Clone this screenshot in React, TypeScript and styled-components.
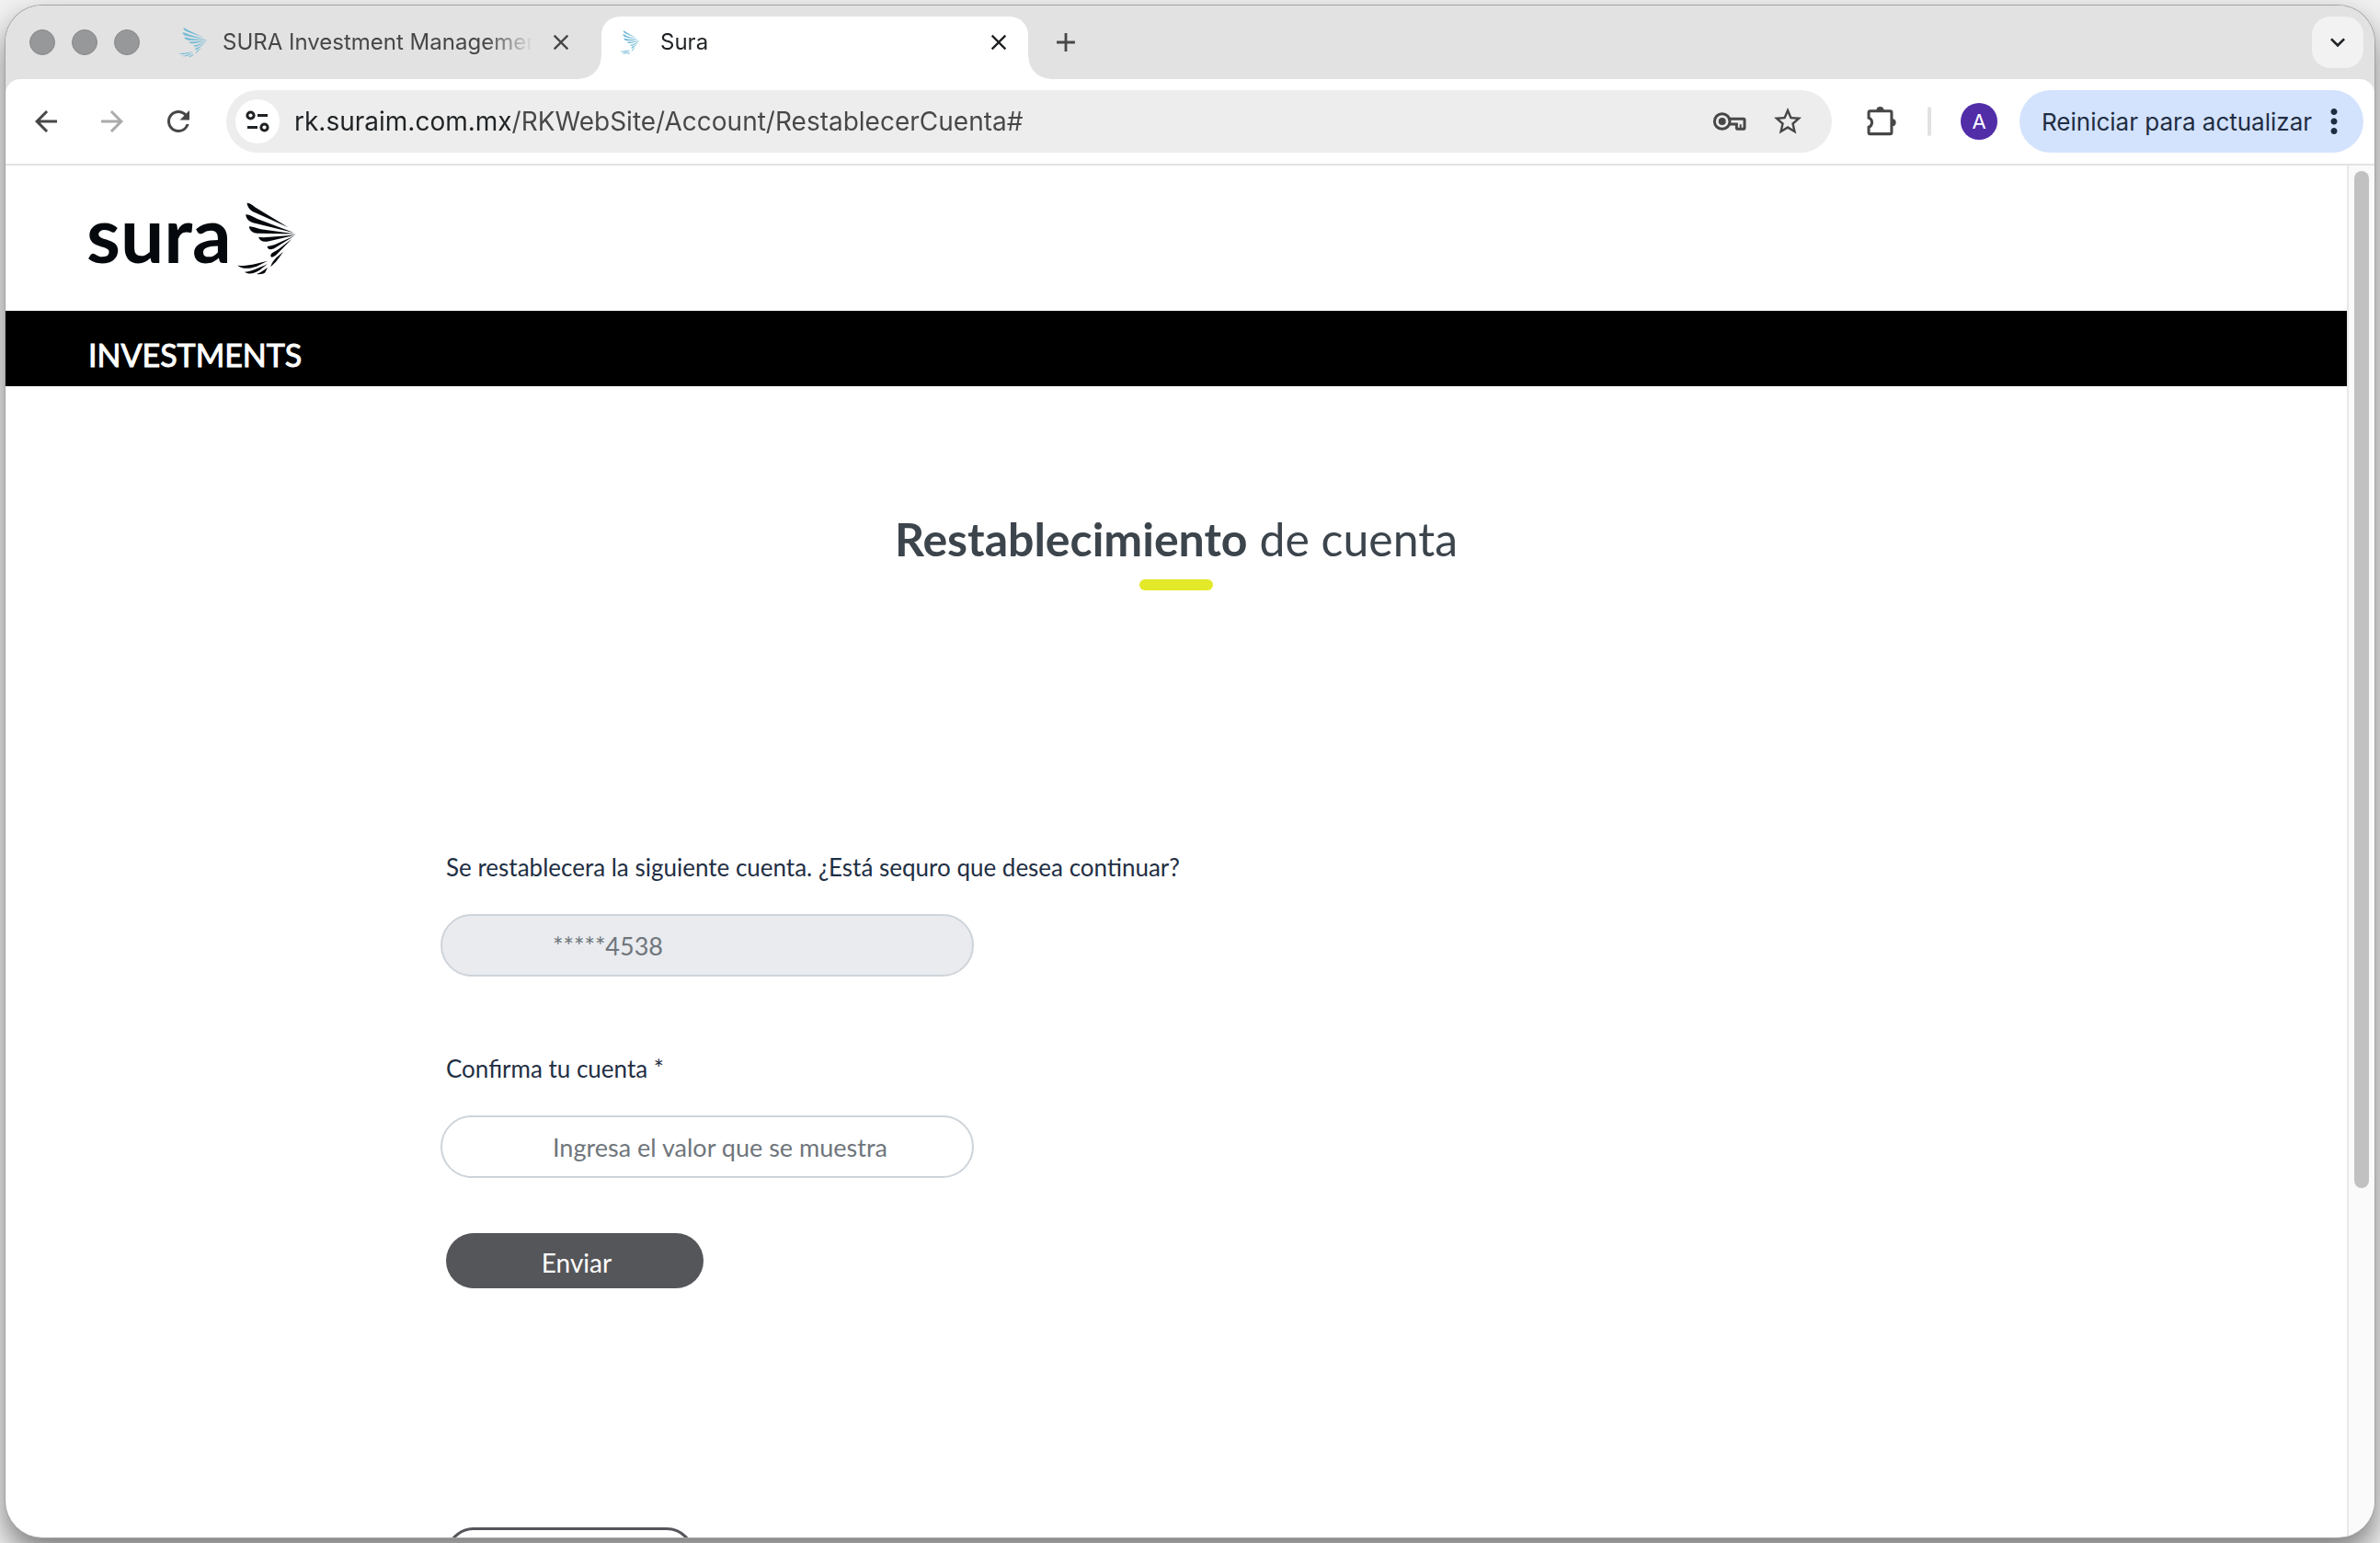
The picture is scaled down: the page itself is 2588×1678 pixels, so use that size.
import React from "react";
import styled, { createGlobalStyle } from "styled-components";
import {
  MdAdd,
  MdArrowBack,
  MdArrowForward,
  MdClose,
  MdExpandMore,
  MdMoreVert,
  MdRefresh,
  MdStarBorder,
} from "react-icons/md";

const uiFont = `Inter, Roboto, "Liberation Sans", sans-serif`;
const siteFont = `Lato, "Open Sans", sans-serif`;

const GlobalStyle = createGlobalStyle`
  *, *::before, *::after { box-sizing: border-box; }
  body { margin: 0; background: #f1f1f2; }
  button { border: 0; padding: 0; margin: 0; background: none; cursor: pointer; }
`;

/* ---------- Browser window ---------- */

const Desktop = styled.div`
  display: flex;
  height: 100vh;
  padding: 6px;
  overflow: hidden;
`;

const Window = styled.div`
  flex: 1;
  display: flex;
  flex-direction: column;
  min-width: 0;
  overflow: hidden;
  border-radius: 40px;
  background: #ffffff;
  box-shadow: 0 0 0 1px #a4a4a6, 0 16px 32px rgba(0, 0, 0, 0.5);
  font-family: ${uiFont};
`;

const Chrome = styled.header`
  background: #e2e2e2;
`;

const TabStrip = styled.div`
  display: flex;
  align-items: flex-start;
  height: 80px;
  padding: 12px 12px 0 26px;
`;

const Lights = styled.div`
  display: flex;
  align-items: center;
  gap: 18px;
  height: 56px;
  margin-right: 22px;
`;

const Light = styled.span`
  width: 28px;
  height: 28px;
  border: 1px solid #87888a;
  border-radius: 50%;
  background: #97989a;
`;

const Tab = styled.div<{ $active?: boolean }>`
  position: relative;
  display: flex;
  align-items: center;
  flex: 0 1 ${(p) => (p.$active ? 464 : 468)}px;
  height: 68px;
  min-width: 0;
  margin-right: ${(p) => (p.$active ? 24 : 12)}px;
  padding: 0 18px 12px 20px;
  border-radius: 20px 20px 0 0;
  background: ${(p) => (p.$active ? "#ffffff" : "transparent")};
  color: ${(p) => (p.$active ? "#1f2224" : "#474747")};

  &::before,
  &::after {
    content: "";
    display: ${(p) => (p.$active ? "block" : "none")};
    position: absolute;
    bottom: 0;
    width: 24px;
    height: 24px;
  }
  &::before {
    right: 100%;
    background: radial-gradient(circle at 0 0, transparent 23px, #ffffff 24px);
  }
  &::after {
    left: 100%;
    background: radial-gradient(circle at 100% 0, transparent 23px, #ffffff 24px);
  }
`;

const TabIcon = styled.span<{ $width: number }>`
  display: flex;
  flex: none;
  width: ${(p) => p.$width}px;
`;

const TabTitle = styled.span`
  flex: 1;
  min-width: 0;
  margin: 0 16px;
  overflow: hidden;
  white-space: nowrap;
  font-size: 24px;
  line-height: 32px;
  mask-image: linear-gradient(90deg, #000 calc(100% - 52px), transparent);
`;

const IconButton = styled.button<{ $size: number; $color?: string }>`
  display: flex;
  flex: none;
  align-items: center;
  justify-content: center;
  width: ${(p) => p.$size}px;
  height: ${(p) => p.$size}px;
  color: ${(p) => p.$color ?? "inherit"};
  svg { flex: none; }
`;

const NewTabSlot = styled.div`
  display: flex;
  align-items: center;
  flex: 1;
  height: 56px;
`;

const TabSearch = styled(IconButton)`
  border-radius: 20px;
  background: #f2f2f2;
`;

const Toolbar = styled.div`
  display: flex;
  align-items: center;
  padding: 12px 12px 12px 26px;
  border-bottom: 2px solid #e2e2e2;
  border-radius: 16px 16px 0 0;
  background: #ffffff;
`;

const NavButtons = styled.nav`
  display: flex;
  gap: 36px;
  margin-right: 34px;
`;

const Omnibox = styled.div`
  display: flex;
  align-items: center;
  flex: 1;
  min-width: 0;
  height: 68px;
  padding: 0 30px 0 10px;
  border-radius: 34px;
  background: #ededed;
`;

const SiteInfo = styled(IconButton)`
  margin-right: 16px;
  border-radius: 50%;
  background: #ffffff;
`;

const Address = styled.input`
  flex: 1;
  min-width: 0;
  padding: 0;
  border: 0;
  outline: 0;
  font-family: ${uiFont};
  font-size: 28px;
  line-height: 36px;
  background: linear-gradient(90deg, #1f2224 235px, #474747 235px);
  background-clip: text;
  -webkit-background-clip: text;
  -webkit-text-fill-color: transparent;
`;

const OmniActions = styled.div`
  display: flex;
  align-items: center;
  gap: 26px;
`;

const Extensions = styled(IconButton)`
  margin: 0 32px 0 36px;
`;

const Divider = styled.span`
  width: 4px;
  height: 32px;
  border-radius: 2px;
  background: #e2e2e2;
`;

const Avatar = styled.button`
  width: 40px;
  height: 40px;
  margin: 0 24px 0 32px;
  border-radius: 50%;
  background: #512da8;
  color: #ffffff;
  font-family: ${uiFont};
  font-size: 22px;
  line-height: 40px;
`;

const UpdateButton = styled.button`
  display: flex;
  align-items: center;
  justify-content: space-between;
  width: 374px;
  height: 68px;
  padding: 0 11px 0 24px;
  border-radius: 34px;
  background: #d3e3fd;
  color: #1f2d42;
  font-family: ${uiFont};
  font-size: 26px;
  white-space: nowrap;
  svg { flex: none; }
`;

/* ---------- Web page ---------- */

const Viewport = styled.div`
  display: flex;
  flex: 1;
  min-height: 0;
`;

const Page = styled.div`
  flex: 1;
  min-width: 0;
  overflow: hidden;
  font-family: ${siteFont};
`;

const ScrollTrack = styled.div`
  display: flex;
  flex-direction: column;
  width: 30px;
  padding: 6px;
  border-left: 2px solid #e8e8e8;
  background: #fafafa;
`;

const ScrollThumb = styled.div`
  flex: 0 0 calc(75% - 4px);
  width: 16px;
  border-radius: 8px;
  background: #c1c1c1;
`;

const SiteHeader = styled.div`
  display: flex;
  align-items: center;
  height: 158px;
  padding: 0 88px;
`;

const Brand = styled.a`
  display: flex;
  align-items: center;
  gap: 6px;
  color: #05090d;
  text-decoration: none;
`;

const Wordmark = styled.span`
  padding-bottom: 10px;
  font-size: 84px;
  font-weight: 700;
  line-height: 100px;
`;

const Band = styled.div`
  padding: 28px 90px 14px;
  background: #000000;
  color: #ffffff;
  font-size: 34px;
  line-height: 40px;
  -webkit-text-stroke: 1px #ffffff;
`;

const Content = styled.main`
  max-width: 1600px;
  margin: 0 auto;
  padding-top: 136px;
`;

const Heading = styled.h1`
  display: flex;
  flex-direction: column;
  align-items: center;
  gap: 14px;
  margin: 0 0 283px;
  color: #3c444c;
  font-size: 50px;
  font-weight: 400;
  line-height: 60px;

  &::after {
    content: "";
    width: 80px;
    height: 12px;
    border-radius: 6px;
    background: #e3e829;
  }
`;

const Form = styled.form`
  display: flex;
  flex-direction: column;
  align-items: flex-start;
`;

const Field = styled.div`
  display: flex;
  flex-direction: column;
  gap: 33px;
  margin-bottom: 82px;
`;

const Label = styled.label`
  padding-left: 6px;
  color: #1f2f44;
  font-size: 26px;
  line-height: 36px;
`;

const TextInput = styled.input`
  width: 580px;
  height: 68px;
  padding: 0 32px 0 120px;
  border: 2px solid #ced4da;
  border-radius: 34px;
  background: #ffffff;
  color: #6f767c;
  font-family: ${siteFont};
  font-size: 27px;

  &::placeholder { color: #6f767c; opacity: 1; }
  &:disabled { background: #e9ebef; }
`;

const Actions = styled.div`
  display: flex;
  flex-direction: column;
  gap: 260px;
  margin-top: -22px;
  padding-left: 6px;
`;

const Submit = styled.button`
  width: 280px;
  height: 60px;
  padding: 4px 0 0 4px;
  border-radius: 30px;
  background: #55565a;
  color: #ffffff;
  font-family: ${siteFont};
  font-size: 28px;
`;

const Secondary = styled.button`
  width: 270px;
  height: 60px;
  border: 3px solid #55565a;
  border-radius: 30px;
  background: #ffffff;
  color: #55565a;
  font-family: ${siteFont};
  font-size: 28px;
`;

/* ---------- Drawings ---------- */

const feathers = [
  "M56 30C64 29 76 38 86 46L192 110L78 60C66 53 57 43 56 30Z",
  "M52 68C64 67 78 76 90 82L212 128L76 95C61 90 53 81 52 68Z",
  "M63 107C76 106 90 114 102 116L217 132L90 130C73 128 64 119 63 107Z",
  "M94 142C106 144 118 143 130 142L217 135L126 156C109 159 98 155 94 142Z",
  "M123 172C134 171 146 169 156 163L212 138L148 178C135 185 123 184 123 172Z",
  "M134 202C136 192 152 189 160 182L204 148L156 197C146 208 134 212 134 202Z",
  "M134 240C136 228 146 216 154 208L176 190L152 222Z",
  "M25 234C44 238 64 234 84 230L124 220L88 238C66 246 38 248 25 234Z",
  "M48 256C68 256 88 246 124 230L98 250C80 262 60 265 48 256Z",
  "M88 263C100 260 112 250 124 242L116 258C110 264 96 265 88 263Z",
];

function Bird({ width, height, color }: { width: number; height: number; color: string }) {
  return (
    <svg width={width} height={height} viewBox="24 28 194 238" preserveAspectRatio="none" fill={color} aria-hidden="true">
      {feathers.map((d) => (
        <path key={d} d={d} />
      ))}
    </svg>
  );
}

const TuneIcon = () => (
  <svg width="26" height="26" viewBox="0 0 26 26" fill="none" stroke="#1f2224" strokeWidth="3" aria-hidden="true">
    <circle cx="5.5" cy="6.5" r="3.6" />
    <path d="M13 6.5H24M2 19.5H13" />
    <circle cx="20.5" cy="19.5" r="3.6" />
  </svg>
);

const KeyIcon = () => (
  <svg width="38" height="24" viewBox="34 72 114 72" fill="none" stroke="#474747" strokeWidth="9" aria-hidden="true">
    <path d="M90 100H136Q139 100 139 104V129Q139 133 135 133H117Q113 133 113 129V117H90" />
    <path d="M126 118V130" strokeWidth="6" />
    <circle cx="66" cy="108" r="25" />
    <circle cx="66" cy="108" r="12" fill="#474747" stroke="none" />
  </svg>
);

const PuzzleIcon = () => (
  <svg width="35" height="35" viewBox="536 54 104 104" fill="none" stroke="#474747" strokeWidth="9" aria-hidden="true">
    <path d="M550 71H614Q619 71 619 76V140Q619 145 614 145H550Q545 145 545 140V123A16 16 0 0 0 545 93V76Q545 71 550 71Z" />
    <path d="M570 69A12 12 0 0 1 594 69ZM621 96A12 12 0 0 1 621 120Z" fill="#474747" stroke="none" />
  </svg>
);

export default function App() {
  return (
    <>
      <GlobalStyle />
      <Desktop>
        <Window>
          <Chrome>
            <TabStrip>
              <Lights>
                <Light />
                <Light />
                <Light />
              </Lights>
              <Tab>
                <TabIcon $width={32}>
                  <Bird width={32} height={32} color="#76bbd6" />
                </TabIcon>
                <TabTitle>SURA Investment Managemen</TabTitle>
                <IconButton $size={28} aria-label="Cerrar pestaña">
                  <MdClose size={28} />
                </IconButton>
              </Tab>
              <Tab $active>
                <TabIcon $width={28}>
                  <Bird width={22} height={26} color="#76bbd6" />
                </TabIcon>
                <TabTitle>Sura</TabTitle>
                <IconButton $size={28} aria-label="Cerrar pestaña">
                  <MdClose size={28} />
                </IconButton>
              </Tab>
              <NewTabSlot>
                <IconButton $size={34} $color="#474747" aria-label="Nueva pestaña">
                  <MdAdd size={34} />
                </IconButton>
              </NewTabSlot>
              <TabSearch $size={56} $color="#1f2224" aria-label="Buscar pestañas">
                <MdExpandMore size={32} />
              </TabSearch>
            </TabStrip>
            <Toolbar>
              <NavButtons>
                <IconButton $size={36} $color="#474747" aria-label="Atrás">
                  <MdArrowBack size={36} />
                </IconButton>
                <IconButton $size={36} $color="#ababab" aria-label="Adelante">
                  <MdArrowForward size={36} />
                </IconButton>
                <IconButton $size={36} $color="#474747" aria-label="Recargar">
                  <MdRefresh size={36} />
                </IconButton>
              </NavButtons>
              <Omnibox>
                <SiteInfo $size={48} aria-label="Información del sitio">
                  <TuneIcon />
                </SiteInfo>
                <Address
                  type="text"
                  aria-label="Dirección"
                  defaultValue="rk.suraim.com.mx/RKWebSite/Account/RestablecerCuenta#"
                />
                <OmniActions>
                  <IconButton $size={38} aria-label="Contraseñas">
                    <KeyIcon />
                  </IconButton>
                  <IconButton $size={36} $color="#474747" aria-label="Favorito">
                    <MdStarBorder size={36} />
                  </IconButton>
                </OmniActions>
              </Omnibox>
              <Extensions $size={36} aria-label="Extensiones">
                <PuzzleIcon />
              </Extensions>
              <Divider />
              <Avatar>A</Avatar>
              <UpdateButton>
                Reiniciar para actualizar
                <MdMoreVert size={42} />
              </UpdateButton>
            </Toolbar>
          </Chrome>
          <Viewport>
            <Page>
              <SiteHeader>
                <Brand href="#">
                  <Wordmark>sura</Wordmark>
                  <Bird width={64} height={79} color="#05090d" />
                </Brand>
              </SiteHeader>
              <Band>INVESTMENTS</Band>
              <Content>
                <Heading>
                  <span>
                    <b>Restablecimiento</b> de cuenta
                  </span>
                </Heading>
                <Form onSubmit={(e) => e.preventDefault()}>
                  <Field>
                    <Label htmlFor="cuenta">
                      Se restablecera la siguiente cuenta. ¿Está sequro que desea continuar?
                    </Label>
                    <TextInput id="cuenta" type="text" placeholder="*****4538" disabled />
                  </Field>
                  <Field>
                    <Label htmlFor="confirma">Confirma tu cuenta *</Label>
                    <TextInput id="confirma" type="text" placeholder="Ingresa el valor que se muestra" />
                  </Field>
                  <Actions>
                    <Submit type="submit">Enviar</Submit>
                    <Secondary type="button" aria-label="Regresar" />
                  </Actions>
                </Form>
              </Content>
            </Page>
            <ScrollTrack>
              <ScrollThumb />
            </ScrollTrack>
          </Viewport>
        </Window>
      </Desktop>
    </>
  );
}
